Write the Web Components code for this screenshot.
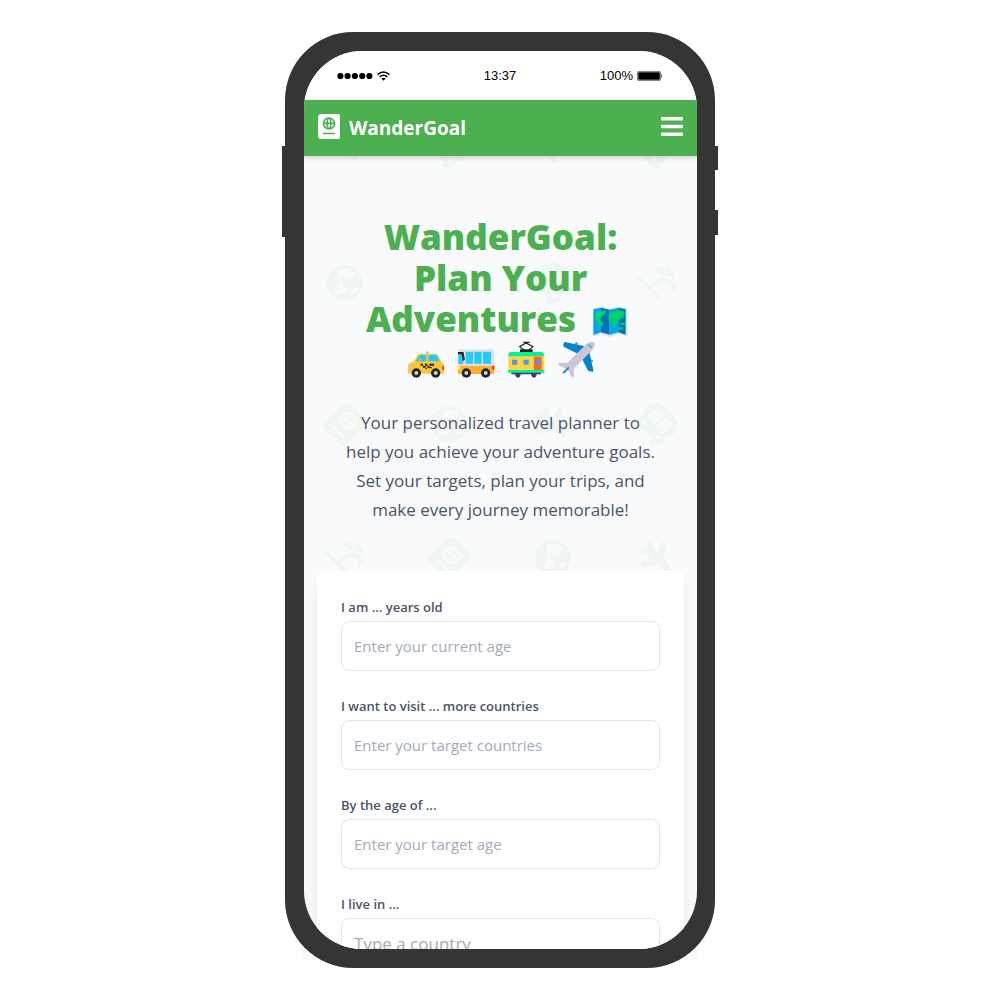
<!DOCTYPE html>
<html lang="en">
<head>
<meta charset="utf-8">
<title>WanderGoal</title>
<style>
  body { margin: 0; background: #fff; font-family: "Open Sans", "Noto Sans", sans-serif; }
</style>
</head>
<body>
<device-frame>
  <status-bar slot="status" time="13:37" battery="100%"></status-bar>
  <app-nav name="WanderGoal"></app-nav>
  <hero-banner>
    <travel-pattern slot="backdrop"></travel-pattern>
    <hero-title slot="title"></hero-title>
    Your personalized travel planner to help you achieve your adventure goals. Set your targets, plan your trips, and make every journey memorable!
  </hero-banner>
  <form-card>
    <form-field label="I am ... years old" placeholder="Enter your current age"></form-field>
    <form-field label="I want to visit ... more countries" placeholder="Enter your target countries"></form-field>
    <form-field label="By the age of ..." placeholder="Enter your target age"></form-field>
    <form-field class="large" label="I live in ..." placeholder="Type a country"></form-field>
  </form-card>
</device-frame>

<script>
const PASSPORT = 'M129.62 176h39.09c1.49-27.03 6.54-51.35 14.21-70.41-27.71 13.24-48.02 39.19-53.3 70.41zm0 32c5.29 31.22 25.59 57.17 53.3 70.41-7.68-19.06-12.72-43.38-14.21-70.41h-39.09zM224 286.69c7.69-7.45 20.77-34.42 23.43-78.69h-46.87c2.67 44.26 15.75 71.24 23.44 78.69zM200.57 176h46.87c-2.66-44.26-15.74-71.24-23.43-78.69-7.7 7.45-20.78 34.43-23.44 78.69zm64.51 102.41c27.71-13.24 48.02-39.19 53.3-70.41h-39.09c-1.49 27.03-6.53 51.35-14.21 70.41zM416 0H64C28.65 0 0 28.65 0 64v384c0 35.35 28.65 64 64 64h352c17.67 0 32-14.33 32-32V32c0-17.67-14.33-32-32-32zm-80 416H112c-8.8 0-16-7.2-16-16s7.2-16 16-16h224c8.8 0 16 7.2 16 16s-7.2 16-16 16zm-112-96c-70.69 0-128-57.31-128-128S153.31 64 224 64s128 57.31 128 128-57.31 128-128 128zm41.08-214.41c7.68 19.06 12.72 43.38 14.21 70.41h39.09c-5.28-31.22-25.59-57.17-53.3-70.41z';
const BARS = 'M16 132h416c8.837 0 16-7.163 16-16V76c0-8.837-7.163-16-16-16H16C7.163 60 0 67.163 0 76v40c0 8.837 7.163 16 16 16zm0 160h416c8.837 0 16-7.163 16-16v-40c0-8.837-7.163-16-16-16H16c-8.837 0-16 7.163-16 16v40c0 8.837 7.163 16 16 16zm0 160h416c8.837 0 16-7.163 16-16v-40c0-8.837-7.163-16-16-16H16c-8.837 0-16 7.163-16 16v40c0 8.837 7.163 16 16 16z';
const PLANE = 'M480 192H365.71L260.61 8.06A16.014 16.014 0 0 0 246.71 0h-65.5c-10.63 0-18.3 10.17-15.38 20.39L214.86 192H112l-43.2-57.6c-3.02-4.03-7.77-6.4-12.8-6.4H16.01C5.6 128-2.04 137.78.49 147.88L32 256 .49 364.12C-2.04 374.22 5.6 384 16.01 384H56c5.04 0 9.78-2.37 12.8-6.4L112 320h102.86l-49.03 171.6c-2.92 10.22 4.75 20.4 15.38 20.4h65.5c5.74 0 11.04-3.08 13.89-8.06L365.71 320H480c35.35 0 96-28.65 96-64s-60.65-64-96-64z';
const BUS = 'M488 128h-8V80c0-44.8-99.2-80-224-80S32 35.2 32 80v48h-8c-13.25 0-24 10.74-24 24v80c0 13.25 10.75 24 24 24h8v160c0 17.67 14.33 32 32 32v32c0 17.67 14.33 32 32 32h32c17.67 0 32-14.33 32-32v-32h192v32c0 17.67 14.33 32 32 32h32c17.67 0 32-14.33 32-32v-32h6.4c16 0 25.6-12.8 25.6-25.6V256h8c13.25 0 24-10.75 24-24v-80c0-13.26-10.75-24-24-24zM112 400c-17.67 0-32-14.33-32-32s14.33-32 32-32 32 14.33 32 32-14.33 32-32 32zm16-112c-17.67 0-32-14.33-32-32V128c0-17.67 14.33-32 32-32h112v192H128zm144 0V96h112c17.67 0 32 14.33 32 32v128c0 17.67-14.33 32-32 32H272zm128 112c-17.67 0-32-14.33-32-32s14.33-32 32-32 32 14.33 32 32-14.33 32-32 32z';
const GLOBE = 'M248 8C111.03 8 0 119.03 0 256s111.03 248 248 248 248-111.03 248-248S384.97 8 248 8zm82.29 357.6c-3.9 3.88-7.99 7.95-11.31 11.28-2.99 3-5.1 6.7-6.17 10.71-1.51 5.66-2.73 11.38-4.77 16.87l-17.39 46.85c-13.76 3-28 4.69-42.65 4.69v-27.38c1.69-12.62-7.64-36.26-22.63-51.25-6-6-9.37-14.14-9.37-22.63v-32.01c0-11.64-6.27-22.34-16.46-27.97-14.37-7.95-34.81-19.06-48.81-26.11-11.48-5.78-22.1-13.14-31.65-21.75l-.8-.72a114.792 114.792 0 0 1-18.06-20.74c-9.38-13.77-24.66-36.42-34.59-51.14 20.47-45.5 57.36-82.04 103.2-101.89l24.01 12.01C203.48 89.74 216 82.01 216 70.11v-11.3c7.99-1.29 16.12-2.11 24.39-2.42l28.3 28.3c6.25 6.25 6.25 16.38 0 22.63L264 112l-10.34 10.34c-3.12 3.12-3.12 8.19 0 11.31l4.69 4.69c3.12 3.12 3.12 8.19 0 11.31l-8 8a8.008 8.008 0 0 1-5.66 2.34h-8.99c-2.08 0-4.08.81-5.58 2.27l-9.92 9.65a8.008 8.008 0 0 0-1.58 9.31l15.59 31.19c2.66 5.32-1.21 11.58-7.15 11.58h-5.64c-1.93 0-3.79-.7-5.24-1.96l-9.28-8.06a16.017 16.017 0 0 0-15.55-3.1l-31.17 10.39a11.95 11.95 0 0 0-8.17 11.34c0 4.53 2.56 8.66 6.61 10.69l11.08 5.54c9.41 4.71 19.79 7.16 30.31 7.16s22.59 27.29 32 32h66.75c8.49 0 16.62 3.37 22.63 9.37l13.69 13.69a30.503 30.503 0 0 1 8.93 21.57 46.536 46.536 0 0 1-13.72 32.98zM417 274.25c-5.79-1.45-10.84-5-14.15-9.97l-17.98-26.97a23.97 23.97 0 0 1 0-26.62l19.59-29.38c2.32-3.47 5.5-6.29 9.24-8.15l12.98-6.49C440.2 193.59 448 223.87 448 256c0 8.67-.74 17.16-1.82 25.54L417 274.25z';

function define(name, render) {
  customElements.define(name, class extends HTMLElement {
    connectedCallback() {
      if (this.shadowRoot) return;
      const template = document.createElement('template');
      template.innerHTML = render(this);
      this.attachShadow({ mode: 'open' }).append(template.content.cloneNode(true));
    }
  });
}

define('device-frame', () => `
  <style>
    :host { display: flex; justify-content: center; padding: 32px 0; }
    .phone {
      position: relative; isolation: isolate; box-sizing: border-box;
      width: 100%; max-width: 430px; aspect-ratio: 430 / 936;
      padding: 19px 18px 19px 19px; border-radius: 68px;
    }
    /* soft sheet that peeks out behind the lower corners */
    .sheet { position: absolute; z-index: -2; inset: 50% 18px 8px 18px; background: #f8f8f9; }
    .body { position: absolute; z-index: -1; inset: 0; border-radius: inherit; background: #373435; }
    .key { position: absolute; width: 4px; background: #373435; }
    .power { left: -3px; top: 114px; height: 91px; }
    .up { right: -3px; top: 114px; height: 24px; }
    .down { right: -3px; top: 178px; height: 25px; }
    .screen {
      height: 100%; overflow: hidden; border-radius: 58px;
      background: #f9fafc; display: flex; flex-direction: column;
    }
    ::slotted(*) { flex: none; }
  </style>
  <div class="phone">
    <div class="sheet"></div><div class="body"></div>
    <span class="key power"></span><span class="key up"></span><span class="key down"></span>
    <div class="screen"><slot name="status"></slot><slot></slot></div>
  </div>`);

define('status-bar', el => `
  <style>
    :host {
      display: grid; grid-template-columns: 1fr auto 1fr; align-items: center;
      height: 49px; padding: 0 34px 0 33px; background: #fff; color: #000;
      font: 13px/16px "Liberation Sans", Arial, sans-serif;
    }
    .side { display: flex; align-items: center; gap: 4px; }
    .end { justify-content: flex-end; }
    svg { display: block; }
  </style>
  <div class="side">
    <svg width="36" height="8" viewBox="0 0 36 8"><circle cx="3.4" cy="4" r="3.1"/><circle cx="10.6" cy="4" r="3.1"/><circle cx="17.9" cy="4" r="3.1"/><circle cx="25.2" cy="4" r="3.1"/><circle cx="32.4" cy="4" r="3.1"/></svg>
    <svg width="13" height="10" viewBox="0 0 13 10" fill="none" stroke="#000" stroke-width="1.5"><path d="M.6 3.6Q6.5-1.6 12.400 3.6M2.700 5.900Q6.500 2.600 10.300 5.900"/><path d="M4.400 7.600Q6.500 5.900 8.600 7.600L6.500 9.800z" fill="#000" stroke="none"/></svg>
  </div>
  <span>${el.getAttribute('time')}</span>
  <div class="side end">
    <span>${el.getAttribute('battery')}</span>
    <svg width="26" height="10" viewBox="0 0 26 10"><rect x=".4" y=".4" width="23.200" height="9.200" rx="1.500" fill="none" stroke="#555" stroke-width=".8"/><rect x="1.200" y="1.200" width="21.600" height="7.600" rx=".8"/><path d="M24.300 3.300Q26 5 24.300 6.700z"/></svg>
  </div>`);

define('app-nav', el => `
  <style>
    :host {
      display: block; position: relative; z-index: 1; color: #fff; background: #4caf50;
      box-shadow: 0 2px 5px rgba(0, 0, 0, .16);
    }
    nav { display: flex; align-items: center; justify-content: space-between; height: 56px; padding: 0 14px; }
    a { display: flex; align-items: center; gap: 9px; color: inherit; text-decoration: none; font-size: 19px; line-height: 26px; font-weight: 700; }
    button { border: 0; padding: 0; background: none; color: inherit; }
    svg { display: block; margin-bottom: 3px; fill: currentColor; }
  </style>
  <nav>
    <a href="#"><svg width="22" height="25" viewBox="0 0 448 512"><path d="${PASSPORT}"/></svg>${el.getAttribute('name')}</a>
    <button type="button" aria-label="Menu"><svg width="22" height="25" viewBox="0 0 448 512"><path d="${BARS}"/></svg></button>
  </nav>`);

define('hero-banner', () => `
  <style>
    :host { display: block; position: relative; padding: 60px 38px 47px; text-align: center; color: #4a5568; }
    slot[name=backdrop] { display: block; }
    p { position: relative; margin: 28px 0 0; font-size: 17px; line-height: 29px; }
  </style>
  <slot name="backdrop"></slot>
  <slot name="title"></slot>
  <p><slot></slot></p>`);

define('travel-pattern', () => {
  const centred = (d, w, scale) => `<g transform="rotate(45) scale(${scale}) translate(${-w / 2} -256)"><path d="${d}"/></g>`;
  const icon = {
    passport: centred(PASSPORT, 448, .069),
    globe: centred(GLOBE, 496, .072),
    plane: centred(PLANE, 576, .062),
    bus: centred(BUS, 512, .072),
    beach: `<g fill="none" stroke="currentColor" stroke-width="3.400" stroke-linecap="round"><path d="M-19-6L2 15M-8 5L5-4"/></g>
      <path d="M-2-14Q2-17 8-16Q6-12 9-7L3-8Q1-11-2-14zM10-16Q17-13 18-5L11-6.500Q8-11 10-16zM4-5.500L9-4.500L16-2.500Q15 1 11 2Q7-1 4-5.500zM18-2Q20 2 17 8Q13 6 12 4Q16 2 18-2z"/>`
  };
  const rows = [
    [-9, 'plane', 'bus', 'beach', 'passport'],
    [127, 'globe', 'plane', 'bus', 'beach'],
    [268, 'passport', 'globe', 'plane', 'bus'],
    [402, 'beach', 'passport', 'globe', 'plane']
  ];
  const marks = rows.map(([y, ...names]) => names.map((n, i) =>
    `<g transform="translate(${41 + i * 104} ${y})">${icon[n]}</g>`).join('')).join('');
  return `
  <style>
    :host { display: block; position: absolute; inset: 0; overflow: hidden; color: #f0f4f2; }
    svg { display: block; width: 100%; height: 100%; fill: currentColor; }
  </style>
  <svg viewBox="0 0 393 416" preserveAspectRatio="xMidYMin slice" aria-hidden="true">${marks}</svg>`;
});

define('hero-title', () => `
  <style>
    :host { display: block; position: relative; }
    h1 { margin: 0; color: #4caf50; font-size: 35px; line-height: 41px; font-weight: 800; white-space: nowrap; }
    svg { width: 50px; height: 41px; vertical-align: -7px; }
    .row { display: flex; justify-content: center; }
  </style>
  <h1>WanderGoal:<br>Plan Your<br>Adventures
    <svg viewBox="555 -9 150 123" role="img" aria-label="World map">
      <path d="M580 24L602 17L629 24L656 17L681 22L683 105L657 99L630 108L603 99L580 106z" fill="#dfe0e4"/>
      <path d="M580 25L603 20V94L580 102z" fill="#00a6ed"/><path d="M603 20L629 26V101L603 94z" fill="#0074ba"/>
      <path d="M629 26L655 20V94L629 101z" fill="#00a6ed"/><path d="M655 20L677 25V101L655 94z" fill="#0074ba"/>
      <path d="M584 40L592 34L603 31L617 32L614 41L607 44L601 54L597 58L603 61L611 65L608 73L601 82L597 73L592 62L586 54zM607 31L617 27L619 31L610 36z" fill="#00d26a"/>
      <path d="M627 41L636 32L645 35L655 28L670 30L675 38L670 43L672 52L664 50L659 58L654 52L651 58L652 66L646 72L644 81L638 78L636 66L628 60L625 51zM659 66H668V71H659zM668 65H674V71H668zM654 79H669V85H654z" fill="#00d26a"/>
    </svg>
    <span class="row">
      <svg viewBox="0 114 150 123" role="img" aria-label="Taxi">
        <path d="M76 151h6v10h-6z" fill="#b4acbc"/>
        <path d="M38 183L49 163Q52 158 60 158H103Q109 158 112 164L121 182L129 190V214Q129 218 124 218H26Q21 218 21 213V194Q22 185 38 183z" fill="#fcc737"/>
        <path d="M44 181L54 165Q56 162 61 162H76V181z" fill="#26c9fc"/><path d="M82 162H103Q107 162 109 166L116 181H82z" fill="#26c9fc"/>
        <path d="M53 172h6v9h-6z" fill="#ffb02e"/>
        <path d="M59 188h7v6h-7zM72 188h7v6h-7zM86 188h7v6h-7zM66 194h7v6h-7zM79 194h7v6h-7zM93 188h6v6h-6zM72 200h7v3h-7zM86 198h6v4h-6z" fill="#212121"/>
        <path d="M21 194h4q4 4 0 12h-4z" fill="#d3d3d3"/><path d="M129 195h-4q-5 5 0 12h4z" fill="#f8312f"/>
        <g fill="#212121"><circle cx="46" cy="216" r="14"/><circle cx="104" cy="216" r="14"/></g>
        <g fill="#d3d3d3"><circle cx="46" cy="216" r="6"/><circle cx="104" cy="216" r="6"/></g>
      </svg><svg viewBox="150 114 150 123" role="img" aria-label="Bus">
        <path d="M173 145H276Q281 146 280 153V198H170V151Q170 147 173 145z" fill="#e1e2e6"/>
        <path d="M170 194H280V214Q280 219 275 219H175Q170 219 170 214z" fill="#ffb02e"/>
        <path d="M172 153h14v36h-14zM194 152h22v36h-22zM220 152h22v36h-22zM246 152h24v36h-24z" fill="#26c9fc"/>
        <path d="M171 153h17v7h-17zM183 160h6v6h-6zM184 165q6-2 7 4v8q-3 4-7 1z" fill="#212121"/>
        <path d="M170 194h6q5 7 0 13h-6z" fill="#fcf05f"/><path d="M280 194h-5q-5 6 0 12h5z" fill="#f8312f"/>
        <g fill="#212121"><circle cx="196" cy="216" r="14"/><circle cx="254" cy="216" r="14"/></g>
        <g fill="#d3d3d3"><circle cx="196" cy="216" r="6"/><circle cx="254" cy="216" r="6"/></g>
      </svg><svg viewBox="301 114 150 123" role="img" aria-label="Tram">
        <path d="M376 126L357 137L373 149M376 126L397 137L382 149M368 124H387" fill="none" stroke="#212121" stroke-width="3.500"/>
        <path d="M358 145h38v9h-38z" fill="#212121"/>
        <path d="M332 213H421V220H332zM343 220h17q-1 10-8 10t-9-10zM391 220h17q-1 10-8 10t-9-10z" fill="#433b6b"/>
        <path d="M323 165H431V209H323z" fill="#fcd53f"/>
        <path d="M322 166Q323 153 331 153H422Q430 153 431 166z" fill="#00f397"/>
        <path d="M322 207H431V215H322z" fill="#00f397"/>
        <path d="M400 167h23v40h-23z" fill="#ff6723"/>
        <path d="M334 176h16v15h-16zM369 176h15v15h-15zM404 176h15v15h-15z" fill="#5092ff"/>
      </svg><svg viewBox="451 114 150 123" role="img" aria-label="Airplane">
        <path d="M522 129l4-5 6 2-1 5zM573 174l4 5-2 5-4-3z" fill="#7d7b8a"/>
        <path d="M490 126Q488 123 493 123L549 135L565 149L578 207Q579 214 574 212L562 209L543 171L527 156L489 137Q486 131 490 126z" fill="#0084ce"/>
        <path d="M556 130Q568 118 580 124Q585 135 575 147L519 203L520 224Q519 231 513 228L501 205L476 194Q470 190 478 185L500 186z" fill="#cdc4d6"/>
        <path d="M486 214L503 197L506 201L491 217Q487 218 486 214z" fill="#0084ce"/>
        <path d="M560 132Q563 128 574 138Q573 143 569 140Q566 134 560 132z" fill="#26a9f0"/>
      </svg>
    </span>
  </h1>`);

define('form-card', () => `
  <style>
    :host { display: block; position: relative; padding: 0 13px; }
    form {
      display: flex; flex-direction: column; gap: 25px; padding: 26px 24px;
      border-radius: 8px 8px 0 0; background: #fff;
      box-shadow: 0 10px 15px -3px rgba(0, 0, 0, .1), 0 4px 6px -2px rgba(0, 0, 0, .05);
    }
  </style>
  <form><slot></slot></form>`);

define('form-field', el => `
  <style>
    :host { display: flex; flex-direction: column; gap: 4px; --size: 15px; }
    :host(.large) { --size: 17px; }
    label { color: #4a5568; font-size: 13px; line-height: 20px; font-weight: 600; }
    input {
      box-sizing: border-box; width: 100%; height: 50px; padding: 0 12px;
      border: 1px solid #e5e7eb; border-radius: 8px; background: #fff;
      color: #4a5568; font-family: inherit; font-size: var(--size); outline: 0;
    }
    input::placeholder { color: #a3abb9; opacity: 1; }
  </style>
  <label for="field">${el.getAttribute('label')}</label>
  <input id="field" type="text" placeholder="${el.getAttribute('placeholder')}">`);
</script>
</body>
</html>
